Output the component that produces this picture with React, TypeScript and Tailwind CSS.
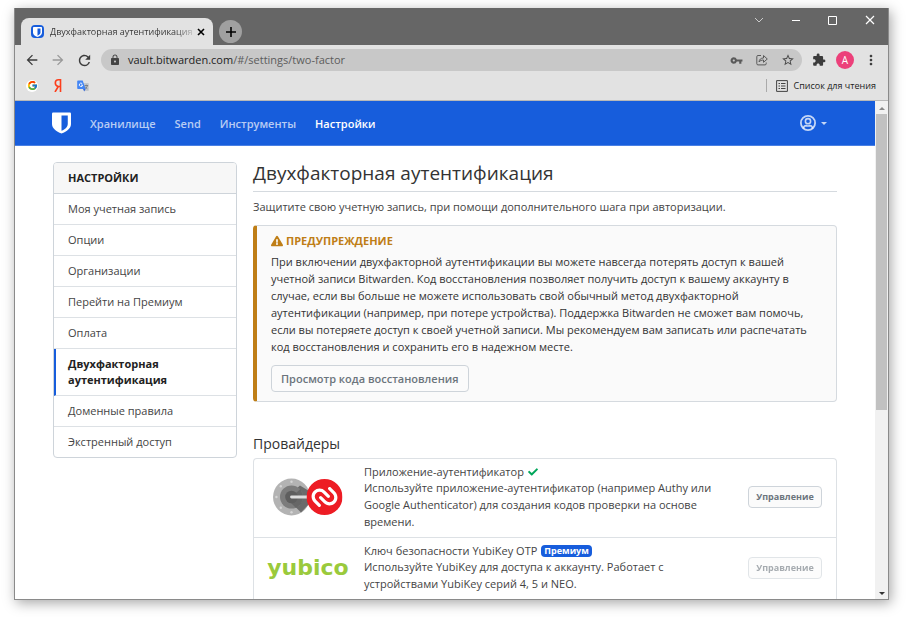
import type { ReactNode } from "react";
import { FaCheck, FaExclamationTriangle } from "react-icons/fa";
import {
  MdArrowBack,
  MdArrowForward,
  MdExtension,
  MdLock,
  MdMoreVert,
  MdRefresh,
  MdStarBorder,
  MdVpnKey,
} from "react-icons/md";
import { FcGoogle } from "react-icons/fc";
import { SiAuthy } from "react-icons/si";

const navLinks = [
  { label: "Хранилище", active: false },
  { label: "Send", active: false },
  { label: "Инструменты", active: false },
  { label: "Настройки", active: true },
];

const settingsLinks = [
  { label: "Моя учетная запись", active: false },
  { label: "Опции", active: false },
  { label: "Организации", active: false },
  { label: "Перейти на Премиум", active: false },
  { label: "Оплата", active: false },
  { label: "Двухфакторная аутентификация", active: true },
  { label: "Доменные правила", active: false },
  { label: "Экстренный доступ", active: false },
];

function Shield({ className, cut }: { className: string; cut: string }) {
  return (
    <svg viewBox="0 0 20 22" className={className} aria-hidden="true">
      <path
        fill="currentColor"
        d="M1.4 0h17.2c.8 0 1.4.5 1.4 1.300V12c0 4.600-4.200 7.700-10 10C4.200 19.700 0 16.600 0 12V1.300C0 .5.600 0 1.400 0z"
      />
      <path className={cut} d="M10 3h6.600v9c0 3.200-2.700 5.300-6.600 7.200z" />
    </svg>
  );
}

function IconButton({ label, className, children }: { label: string; className: string; children: ReactNode }) {
  return (
    <button type="button" aria-label={label} className={`flex shrink-0 items-center justify-center ${className}`}>
      {children}
    </button>
  );
}

function TabStrip() {
  return (
    <div className="flex h-[37px] items-end bg-[#666] pl-1.5">
      <div className="flex h-[27px] w-[192px] items-center rounded-t-lg bg-[#e2e2e2] pr-2 pl-2.5">
        <span className="flex h-[13px] w-[13px] shrink-0 items-center justify-center rounded-sm bg-[#175ddc] text-white">
          <Shield className="h-[10px] w-[9px]" cut="fill-[#175ddc]" />
        </span>
        <span className="ml-1.5 flex-1 bg-gradient-to-r from-[#333] from-85% to-[#e2e2e2] bg-clip-text text-[9px] leading-4 whitespace-nowrap text-transparent">
          Двухфакторная аутентификация
        </span>
        <IconButton label="Закрыть вкладку" className="h-4 w-2 text-black">
          <svg viewBox="0 0 8 8" className="h-2 w-2" stroke="currentColor" strokeWidth="1.6">
            <path d="M1 1l6 6M7 1L1 7" />
          </svg>
        </IconButton>
      </div>
      <IconButton label="Новая вкладка" className="mb-[2px] ml-1.5 h-[23px] w-[23px] rounded-full bg-[#a0a0a0] text-black">
        <svg viewBox="0 0 10 10" className="h-2.5 w-2.5" stroke="currentColor" strokeWidth="1.600">
          <path d="M5 0v10M0 5h10" />
        </svg>
      </IconButton>
      <div className="ml-auto flex self-start text-white">
        <IconButton label="Поиск вкладок" className="h-6 w-[37px] text-[#ccc]">
          <svg viewBox="0 0 10 10" className="h-2.5 w-2.5" fill="none" stroke="currentColor">
            <path d="M1 3l4 4 4-4" />
          </svg>
        </IconButton>
        <IconButton label="Свернуть" className="h-6 w-[37px]">
          <svg viewBox="0 0 8 8" className="h-2 w-2" stroke="currentColor">
            <path d="M0 4.500h8" />
          </svg>
        </IconButton>
        <IconButton label="Развернуть" className="h-6 w-[37px]">
          <svg viewBox="0 0 9 9" className="h-[9px] w-[9px]" fill="none" stroke="currentColor">
            <path d="M.5.5h8v8h-8z" />
          </svg>
        </IconButton>
        <IconButton label="Закрыть" className="h-6 w-[37px]">
          <svg viewBox="0 0 10 10" className="h-2.5 w-2.5" stroke="currentColor" strokeWidth="1.200">
            <path d="M1 1l8 8M9 1L1 9" />
          </svg>
        </IconButton>
      </div>
    </div>
  );
}

function Toolbar() {
  return (
    <div className="flex h-[30px] items-center bg-[#e2e2e2] pr-1 pl-1 text-[#3c3c3c]">
      <IconButton label="Назад" className="h-6 w-[26px]">
        <MdArrowBack className="h-4 w-4" />
      </IconButton>
      <IconButton label="Вперед" className="h-6 w-[26px] text-[#999]">
        <MdArrowForward className="h-4 w-4" />
      </IconButton>
      <IconButton label="Обновить" className="h-6 w-[26px]">
        <MdRefresh className="h-[17px] w-[17px]" />
      </IconButton>
      <div className="ml-1 flex h-[22px] flex-1 items-center rounded-full bg-[#c8c8c8] pr-0.5 pl-2">
        <MdLock className="h-3 w-3 shrink-0 text-[#444]" />
        <a href="#two-factor" className="ml-[7px] flex-1 text-[11px] leading-4 whitespace-nowrap text-[#5c5c5c]">
          <span className="text-[#222]">vault.bitwarden.com</span>/#/settings/two-factor
        </a>
        <IconButton label="Пароли" className="h-5 w-[25px] text-[#5a5a5a]">
          <MdVpnKey className="h-[13px] w-[13px]" />
        </IconButton>
        <IconButton label="Поделиться" className="h-5 w-[26px] text-[#5a5a5a]">
          <svg viewBox="0 0 12 12" className="h-3 w-3" fill="none" stroke="currentColor" strokeLinejoin="round">
            <path d="M5 1.500H2a1.200 1.200 0 0 0-1.200 1.200v7A1.200 1.200 0 0 0 2 10.900h7a1.200 1.200 0 0 0 1.200-1.200V8.500M3 8c.3-2.600 1.800-4 4.500-4V1.500L11.300 5 7.500 8.300V6C5.500 6 4.200 6.600 3 8z" />
          </svg>
        </IconButton>
        <IconButton label="Добавить в закладки" className="h-5 w-[25px] text-[#4a4a4a]">
          <MdStarBorder className="h-3.5 w-3.5" />
        </IconButton>
      </div>
      <IconButton label="Расширения" className="ml-1 h-6 w-[26px]">
        <MdExtension className="h-3.5 w-3.5" />
      </IconButton>
      <IconButton label="Профиль" className="ml-1 h-[18px] w-[18px] rounded-full bg-[#ec407a] text-[10px] text-white">
        А
      </IconButton>
      <IconButton label="Меню" className="ml-1 h-6 w-[26px]">
        <MdMoreVert className="h-4 w-4" />
      </IconButton>
    </div>
  );
}

function TranslateIcon() {
  return (
    <svg viewBox="0 0 12 12" className="h-3 w-3" aria-hidden="true">
      <path d="M5.500 3H11a.8.8 0 0 1 .8.8v6.400a.8.8 0 0 1-.8.8H7.500z" fill="#c4c8cc" />
      <path d="M7.500 5.500h3.600M9.300 4.700v.8M10.500 5.500c-.3 1.500-1.200 2.500-2.200 3.200M8 6.500c.5 1 1.400 1.800 2.400 2.300" fill="none" stroke="#70757a" strokeWidth=".8" />
      <path d="M1 .5h4.700L8.600 9H1a.8.8 0 0 1-.8-.8V1.300A.8.8 0 0 1 1 .5z" fill="#4285f4" />
      <path d="M6 9h2.600l-1.400 2.500z" fill="#3367d6" />
      <path d="M5.200 3.600a1.700 1.700 0 1 0 .5 1.500H4" fill="none" stroke="#fff" strokeWidth=".9" />
    </svg>
  );
}

function Bookmarks() {
  return (
    <div className="flex h-[26px] items-center border-b border-[#b8b8b8] bg-[#e2e2e2] pr-3 pb-1 pl-[11px]">
      <a href="#google" aria-label="Google" className="flex h-3 w-3 items-center justify-center rounded-full bg-white">
        <FcGoogle className="h-[11px] w-[11px]" />
      </a>
      <a href="#yandex" aria-label="Яндекс" className="ml-4 flex h-4 w-2 items-center justify-center text-[#fc3f1d]">
        <svg viewBox="0 0 8 13" className="h-[13px] w-2" fill="none" stroke="currentColor" strokeWidth="1.600">
          <path d="M6.500 13V.8H4.500C2.500.8 1.300 2 1.300 4s1 3.100 3 3.500h2.200M4.300 7.500L1 13" />
        </svg>
      </a>
      <a href="#translate" aria-label="Переводчик" className="ml-[15px]">
        <TranslateIcon />
      </a>
      <button type="button" className="ml-auto flex items-center border-l border-[#aaa] pl-[9px] text-[9px] leading-[13px] text-[#222]">
        <svg viewBox="0 0 12 12" className="mr-1.5 h-3 w-3" fill="none" stroke="#444">
          <path d="M.6.600h10.800v10.800H.6zM5 3.500h4.500M5 6h4.500M5 8.500h4.500M2.500 3.500H4M2.500 6H4M2.500 8.500H4" />
        </svg>
        Список для чтения
      </button>
    </div>
  );
}

function VaultHeader() {
  return (
    <header className="flex h-[45px] items-center border-b border-[#4a80e4] bg-[#175ddc] px-[37px] text-white">
      <a href="#vault" aria-label="Bitwarden">
        <Shield className="h-[22px] w-[19px]" cut="fill-[#175ddc]" />
      </a>
      <nav className="ml-[19px] flex gap-[19px] text-[11px] leading-[17px] font-semibold">
        {navLinks.map((link) => (
          <a key={link.label} href={`#${link.label}`} className={link.active ? "text-white" : "text-white/70"}>
            {link.label}
          </a>
        ))}
      </nav>
      <button type="button" aria-label="Учетная запись" className="mr-[11px] ml-auto flex items-center gap-[5px] text-white/75">
        <svg viewBox="0 0 16 16" className="h-4 w-4" fill="none" stroke="currentColor" aria-hidden="true">
          <circle cx="8" cy="8" r="7.100" strokeWidth="1.800" />
          <circle cx="8" cy="6.200" r="2.600" strokeWidth="1.600" />
          <path d="M2.600 13c.6-2.400 1.800-3.300 3.400-3.300 1.300.6 2.700.6 4 0 1.600 0 2.800.9 3.400 3.300l-1.400 1-1-2.200H5L4 14z" fill="currentColor" stroke="none" />
        </svg>
        <span className="border-x-[3px] border-t-[3px] border-x-transparent border-t-current" />
      </button>
    </header>
  );
}

function Sidebar() {
  return (
    <aside className="w-[184px] shrink-0 self-start overflow-hidden rounded-sm border border-[#ced4da] text-[11px] leading-4">
      <h2 className="border-b border-[#ced4da] bg-[#f7f7f7] px-3.5 py-[7px] font-bold text-[#222]">НАСТРОЙКИ</h2>
      <nav className="divide-y divide-[#dde1e5]">
        {settingsLinks.map((link) => (
          <a
            key={link.label}
            href={`#${link.label}`}
            className={
              link.active
                ? "block border-l-2 border-l-[#175ddc] py-[7px] pr-3.5 pl-3 font-bold text-[#222]"
                : "block px-3.5 py-[7px] text-[#444]"
            }
          >
            {link.label}
          </a>
        ))}
      </nav>
    </aside>
  );
}

function Warning() {
  return (
    <section className="mt-[10px] rounded-sm border border-l-4 border-[#d5dadf] border-l-[#bf7e16] bg-[#fafafa] px-3.5 pt-1.5 pb-[9px]">
      <h3 className="flex items-center gap-[3px] text-[11px] leading-[17px] font-bold text-[#bf7e16]">
        <FaExclamationTriangle className="h-3 w-3" aria-hidden="true" />
        ПРЕДУПРЕЖДЕНИЕ
      </h3>
      <p className="mt-1 text-[11px] leading-[17px] text-[#333]">
        При включении двухфакторной аутентификации вы можете навсегда потерять доступ к вашей учетной записи Bitwarden.
        Код восстановления позволяет получить доступ к вашему аккаунту в случае, если вы больше не можете использовать
        свой обычный метод двухфакторной аутентификации (например, при потере устройства). Поддержка Bitwarden не сможет
        вам помочь, если вы потеряете доступ к своей учетной записи. Мы рекомендуем вам записать или распечатать код
        восстановления и сохранить его в надежном месте.
      </p>
      <button
        type="button"
        className="mt-[10px] block rounded-sm border border-[#ced4da] bg-[#fbfbfb] px-[9px] py-1 text-[11px] leading-[17px] font-semibold text-[#6c757d]"
      >
        Просмотр кода восстановления
      </button>
    </section>
  );
}

function AuthenticatorLogo() {
  return (
    <svg viewBox="0 0 70 38" className="h-[38px] w-[70px]" role="img" aria-label="Google Authenticator, Authy">
      <circle cx="18.500" cy="19" r="18.500" fill="#b3b3b3" />
      <path d="M20 14l7-6.500L36 13v13l-8 8.500L18.500 25z" fill="#6b6b6b" />
      <circle cx="18.500" cy="19" r="11.500" fill="#7c7c7c" />
      <path d="M18.500 19l9-8 3 8-2.500 7-5 4-7-7z" fill="#666" />
      <circle cx="18.500" cy="19" r="6.300" fill="#5e5e5e" />
      <g fill="#d5d5d5">
        <circle cx="18.500" cy="3.800" r="1.200" />
        <circle cx="7.800" cy="8.300" r="1.200" />
        <circle cx="3.400" cy="19" r="1.200" />
        <circle cx="7.800" cy="29.700" r="1.200" />
        <circle cx="18.500" cy="34.200" r="1.200" />
      </g>
      <path d="M18.500 19h16" stroke="#ddd" strokeWidth="2.800" strokeLinecap="round" />
      <circle cx="51.500" cy="19" r="17" fill="#fff" />
      <SiAuthy x="33.500" y="1" size={36} color="#ed1c24" />
    </svg>
  );
}

function Provider({
  logo,
  title,
  mark,
  description,
  disabled,
}: {
  logo: ReactNode;
  title: string;
  mark: ReactNode;
  description: string;
  disabled?: boolean;
}) {
  return (
    <li className="flex items-center px-3.5 pt-[5px] pb-[7px]">
      <div className="flex w-[80px] shrink-0 justify-center">{logo}</div>
      <div className="ml-4 flex-1 text-[11px] text-[#444]">
        <h3 className="flex items-center gap-1 leading-[15px]">
          {title}
          {mark}
        </h3>
        <p className="leading-[17px]">{description}</p>
      </div>
      <button
        type="button"
        disabled={disabled}
        className="ml-6 w-[74px] shrink-0 rounded-sm border border-[#ced4da] bg-[#fbfbfb] py-[3px] text-center text-[9px] leading-[14px] font-bold text-[#6c757d] disabled:opacity-60"
      >
        Управление
      </button>
    </li>
  );
}

function Scrollbar() {
  return (
    <div className="flex w-[13px] shrink-0 flex-col items-center bg-[#f1f1f1] py-1" aria-hidden="true">
      <span className="mt-0.5 border-x-[3px] border-b-[3px] border-x-transparent border-b-[#888]" />
      <div className="mt-1 mb-2 w-full flex-1 px-px">
        <div className="h-[63%] bg-[#c1c1c1]" />
      </div>
      <span className="border-x-[3px] border-t-[3px] border-x-transparent border-t-[#333]" />
    </div>
  );
}

export default function App() {
  return (
    <div className="h-screen overflow-hidden bg-white pt-2 pr-[17px] pb-[17px] pl-[14px] font-['Open_Sans','Noto_Sans',sans-serif]">
      <div className="flex h-full flex-col overflow-hidden border border-t-0 border-[#8a8a8a] bg-white shadow-[2px_3px_12px_rgba(0,0,0,0.35)]">
        <TabStrip />
        <Toolbar />
        <Bookmarks />
        <div className="flex min-h-0 flex-1">
          <div className="min-w-0 flex-1 overflow-hidden">
            <VaultHeader />
            <div className="flex gap-4 px-[38px] pt-4">
              <Sidebar />
              <main className="min-w-0 flex-1">
                <h1 className="border-b border-[#d5dadf] pb-1.5 text-[19px] leading-[23px] text-[#333]">
                  Двухфакторная аутентификация
                </h1>
                <p className="mt-1.5 text-[11px] leading-[17px] text-[#444]">
                  Защитите свою учетную запись, при помощи дополнительного шага при авторизации.
                </p>
                <Warning />
                <h2 className="mt-8 text-[14px] leading-[19px] text-[#333]">Провайдеры</h2>
                <ul className="mt-[5px] divide-y divide-[#dde1e5] rounded-t-sm border border-b-0 border-[#dde1e5]">
                  <Provider
                    logo={<AuthenticatorLogo />}
                    title="Приложение-аутентификатор"
                    mark={<FaCheck className="h-[10px] w-[10px] text-[#00a65a]" aria-label="Включено" />}
                    description="Используйте приложение-аутентификатор (например Authy или Google Authenticator) для создания кодов проверки на основе времени."
                  />
                  <Provider
                    logo={
                      <span className="font-['DejaVu_Sans',sans-serif] text-[22px] leading-[30px] font-bold text-[#9aca3c]">
                        yubico
                      </span>
                    }
                    title="Ключ безопасности YubiKey OTP"
                    mark={
                      <span className="rounded-sm bg-[#175ddc] px-[3px] text-[9px] leading-3 font-bold text-white">
                        Премиум
                      </span>
                    }
                    description="Используйте YubiKey для доступа к аккаунту. Работает с устройствами YubiKey серий 4, 5 и NEO."
                    disabled
                  />
                </ul>
              </main>
            </div>
          </div>
          <Scrollbar />
        </div>
      </div>
    </div>
  );
}
